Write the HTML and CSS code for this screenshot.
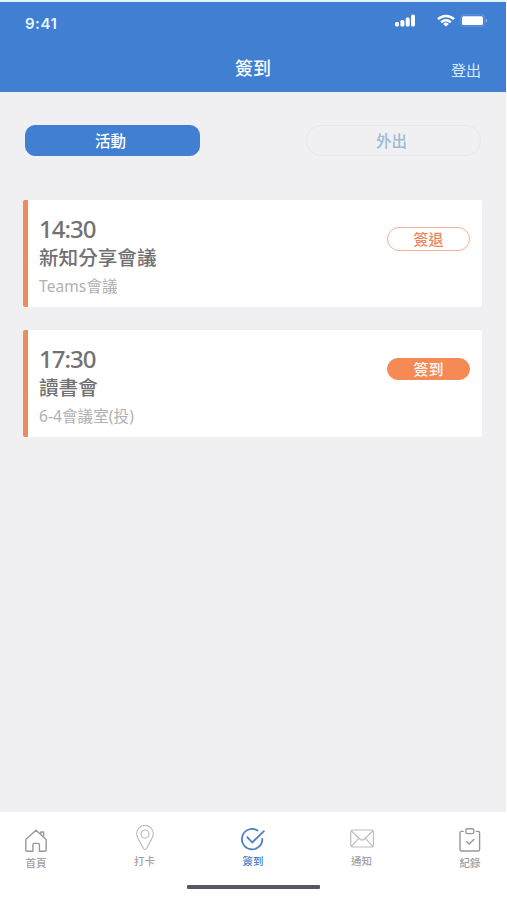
FILE: index.html
```html
<!DOCTYPE html>
<html lang="zh-Hant">
    <head>
        <meta charset="UTF-8" />
        <meta name="viewport" content="width=device-width, initial-scale=1.0" />
        <title>簽到</title>
        <link rel="stylesheet" href="styles.css" />
    </head>
    <body>
        <div class="app">
            <header class="header">
                <div class="status-bar">
                    <span class="status-time">9:41</span>
                    <div class="status-icons">
                        <svg class="signal" width="20" height="13" viewBox="0 0 20 13" fill="#fff">
                            <rect x="0" y="8" width="4" height="4.6" rx="1.5" />
                            <rect x="5.4" y="6" width="4" height="6.6" rx="1.5" />
                            <rect x="10.7" y="3.4" width="4" height="9.2" rx="1.5" />
                            <rect x="16" y="0.5" width="4" height="12.1" rx="1.5" />
                        </svg>
                        <svg class="wifi" width="18" height="13" viewBox="0 0 18 13" fill="none" stroke="#fff" stroke-width="2.5">
                            <path d="M1 5.2 A11.4 11.4 0 0 1 17 5.2" />
                            <path d="M4.2 8.3 A6.9 6.9 0 0 1 13.8 8.3" />
                            <path d="M9 12.6 L6.2 9.9 A4 4 0 0 1 11.8 9.9 Z" fill="#fff" stroke="none" />
                        </svg>
                        <svg class="battery" width="28" height="13" viewBox="0 0 28 13">
                            <rect x="0.8" y="0.8" width="24" height="11.4" rx="3" fill="none" stroke="#fff" stroke-opacity="0.2" />
                            <rect x="2" y="2.2" width="21" height="8.8" rx="1.6" fill="#fff" />
                            <path d="M26 4.5 Q27.6 6.5 26 8.5 Z" fill="#fff" fill-opacity="0.6" />
                        </svg>
                    </div>
                </div>
                <div class="title-bar">
                    <h1>簽到</h1>
                    <a class="logout" href="#">登出</a>
                </div>
            </header>

            <main class="content">
                <div class="tabs">
                    <button type="button" class="tab active">活動</button>
                    <button type="button" class="tab">外出</button>
                </div>

                <div class="card">
                    <div class="card-info">
                        <p class="card-time">14:30</p>
                        <h2>新知分享會議</h2>
                        <p class="card-place">Teams會議</p>
                    </div>
                    <button type="button" class="btn">簽退</button>
                </div>

                <div class="card">
                    <div class="card-info">
                        <p class="card-time">17:30</p>
                        <h2>讀書會</h2>
                        <p class="card-place">6-4會議室(投)</p>
                    </div>
                    <button type="button" class="btn btn-fill">簽到</button>
                </div>
            </main>

            <footer class="footer">
                <nav class="nav">
                    <a class="nav-item nav-home" href="#">
                        <svg width="24" height="26" viewBox="0 0 24 26" fill="none" stroke="#98989c" stroke-width="1.4" stroke-linejoin="round">
                            <path d="M1.8 12.4 L12 3.2 L22.2 12.4 V22.7 Q22.2 24.2 20.7 24.2 H15.4 V17.8 Q15.4 16.4 14 16.4 H10.3 Q8.9 16.4 8.9 17.8 V24.2 H3.3 Q1.8 24.2 1.8 22.7 Z" />
                            <path d="M16.8 7.1 V5 H19.6 V9.6" />
                        </svg>
                        <span>首頁</span>
                    </a>
                    <a class="nav-item nav-pin" href="#">
                        <svg width="24" height="26" viewBox="0 0 24 26" fill="none" stroke="#bcbcbf" stroke-width="1.2">
                            <path d="M12 24.7 C10.8 24.7 10.3 23.6 9.5 21.8 C7.4 17 3.7 13.2 3.7 8.5 A8.3 8 0 0 1 20.3 8.5 C20.3 13.2 16.6 17 14.5 21.8 C13.7 23.6 13.2 24.7 12 24.7 Z" />
                            <circle cx="12" cy="9" r="4" />
                        </svg>
                        <span>打卡</span>
                    </a>
                    <a class="nav-item nav-check active" href="#">
                        <svg width="26" height="26" viewBox="0 0 26 26" fill="none" stroke="#4a7fc8" stroke-width="1.8" stroke-linecap="round" stroke-linejoin="round">
                            <path d="M17.5 5.5 A10.2 10.2 0 1 0 22.3 14" />
                            <path d="M7.3 12.2 L12.2 17.5 L23.9 6.2" />
                        </svg>
                        <span>簽到</span>
                    </a>
                    <a class="nav-item nav-mail" href="#">
                        <svg width="26" height="26" viewBox="0 0 26 26" fill="none" stroke="#bcbcbf" stroke-width="1.2">
                            <rect x="1.7" y="5" width="22.8" height="17" rx="2.2" />
                            <path d="M2.4 6 L10.8 14 Q13.1 16 15.4 14 L23.8 6" />
                            <path d="M2.4 21.3 L9.6 13.7 M23.8 21.3 L16.6 13.7" />
                        </svg>
                        <span>通知</span>
                    </a>
                    <a class="nav-item nav-record" href="#">
                        <svg width="24" height="26" viewBox="0 0 24 26" fill="none" stroke="#98989c" stroke-width="1.4" stroke-linecap="round" stroke-linejoin="round">
                            <path d="M5.2 4.4 H3.6 Q2 4.4 2 6 V22.4 Q2 24 3.6 24 H20 Q21.6 24 21.6 22.4 V6 Q21.6 4.4 20 4.4 H18.4" />
                            <rect x="7.8" y="1.8" width="8" height="4.8" rx="1.7" />
                            <path d="M8.6 14.8 L11.2 17 L15.8 12.6" />
                        </svg>
                        <span>紀錄</span>
                    </a>
                </nav>
                <div class="home-bar"></div>
            </footer>
        </div>
    </body>
</html>
```

FILE: styles.css
```css
* {
    box-sizing: border-box;
}

body,
h1,
h2,
p {
    margin: 0;
}

body {
    font-family: "Noto Sans", "Noto Sans CJK TC", sans-serif;
    background-color: #fff;
}

button {
    padding: 0;
    font-family: inherit;
    cursor: pointer;
}

a {
    text-decoration: none;
}

.app {
    display: flex;
    flex-direction: column;
    width: 506px;
    height: 900px;
    border-top: 2px solid #e3f6fd;
    background-color: #f0f0f2;
}

/* header */
.header {
    height: 90px;
    color: #fff;
    background-color: #407fd2;
}

.status-bar {
    display: flex;
    justify-content: space-between;
    height: 42px;
    padding: 12px 18px 0 25px;
}

.status-time {
    font-family: Inter, sans-serif;
    font-size: 15px;
    font-weight: 600;
    line-height: 20px;
    letter-spacing: 0.5px;
    color: #e9f6ff;
}

.status-icons {
    display: flex;
}

.wifi {
    margin-left: 22px;
}

.battery {
    margin-left: 5px;
}

.title-bar {
    display: grid;
    grid-template-columns: 1fr auto 1fr;
    align-items: center;
    height: 48px;
    padding: 0 25px;
}

.title-bar h1 {
    grid-column: 2;
    font-size: 18px;
    font-weight: 500;
    line-height: 45px;
}

.logout {
    justify-self: end;
    padding-top: 3px;
    font-size: 15px;
    line-height: 42px;
    color: #dcebfb;
}

/* content */
.content {
    flex: 1;
    padding: 33px 24px 0 23px;
}

.tabs {
    display: flex;
    justify-content: space-between;
    padding: 0 1px 0 2px;
    margin-bottom: 45px;
}

.tab {
    width: 175px;
    height: 31px;
    margin-bottom: -1px;
    padding-right: 4px;
    border: 1px solid #e5e8eb;
    border-radius: 15px;
    font-size: 15.5px;
    font-weight: 500;
    line-height: 28px;
    color: #9dbbd3;
    background-color: transparent;
}

.tab.active {
    border-color: #407fd2;
    border-radius: 10px;
    color: #fff;
    background-color: #407fd2;
}

.card {
    display: flex;
    justify-content: space-between;
    height: 107px;
    margin-bottom: 23px;
    padding: 14px 12px 0 11px;
    border-left: 5px solid #ec8c5f;
    border-radius: 2px;
    background-color: #fff;
}

.card-time {
    font-size: 24px;
    font-weight: 500;
    line-height: 29px;
    letter-spacing: -1px;
    color: #727272;
}

.card h2 {
    font-size: 19.6px;
    font-weight: 500;
    line-height: 30px;
    color: #707070;
}

.card-place {
    font-size: 15.5px;
    line-height: 26px;
    letter-spacing: 0.1px;
    color: #b0b0b0;
}

.btn {
    width: 83px;
    height: 24px;
    margin-top: 13px;
    border: 1px solid #f3b09a;
    border-radius: 12px;
    font-size: 15px;
    font-weight: 500;
    line-height: 22px;
    color: #ee8455;
    background-color: #fff;
}

.btn-fill {
    height: 22px;
    margin-top: 14px;
    border-color: #f58a55;
    line-height: 20px;
    color: #fff;
    background-color: #f58a55;
}

/* footer */
.footer {
    height: 88px;
    background-color: #fff;
}

.nav {
    display: flex;
    justify-content: space-between;
    height: 73px;
    padding: 15px 23px 0;
}

.nav-item {
    display: flex;
    flex-direction: column;
    align-items: center;
    width: 26px;
    font-size: 10.5px;
    font-weight: 500;
    line-height: 16px;
    white-space: nowrap;
    color: #a2a2a5;
}

.nav-item span {
    margin-top: 2px;
}

.nav-item.active {
    color: #4a7fc8;
}

.nav-pin {
    margin-top: -2px;
}

.nav-check {
    margin-top: -2px;
}

.nav-mail {
    margin-top: -2px;
}

.home-bar {
    width: 133px;
    height: 4px;
    margin: 0 auto;
    border-radius: 1px;
    background-color: #555766;
}
```
